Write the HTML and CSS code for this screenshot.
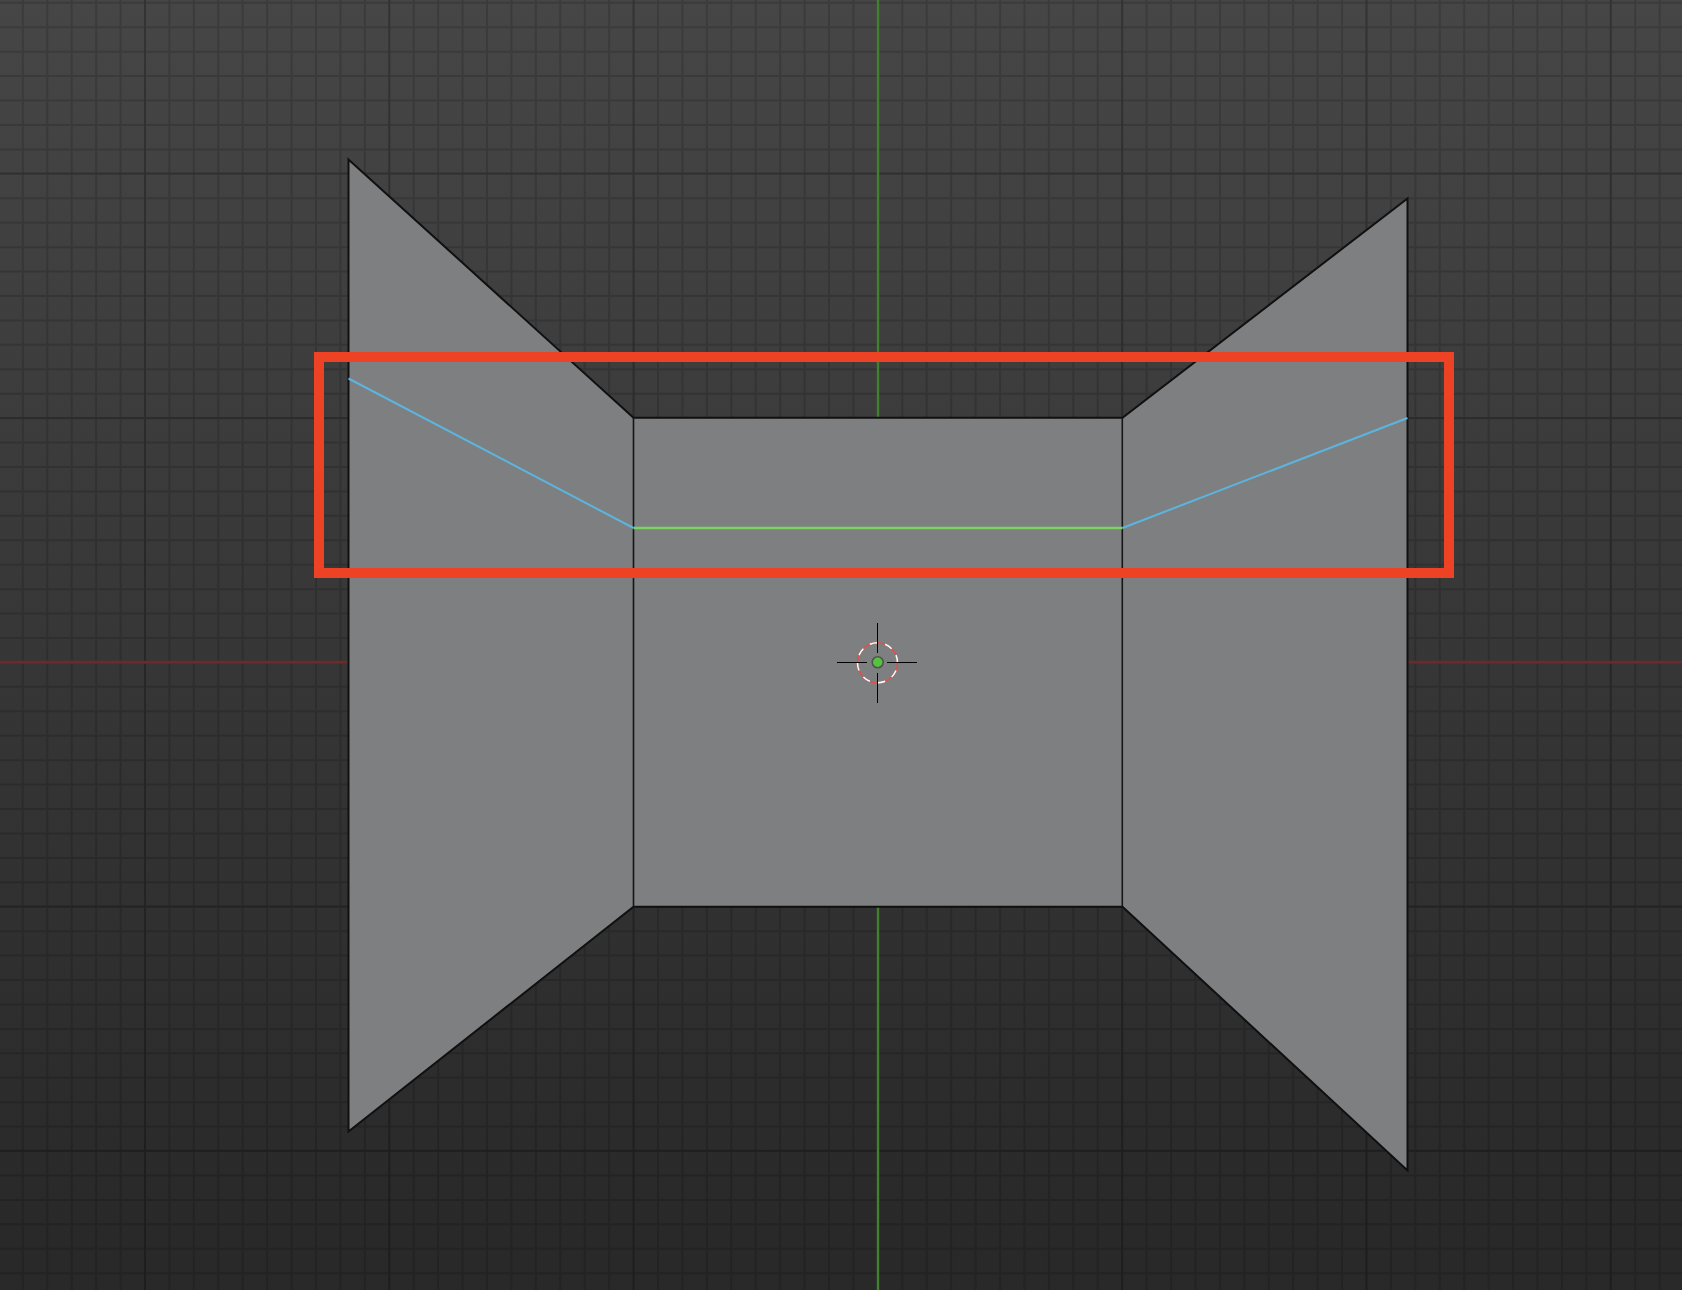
FILE: index.html
```html
<!DOCTYPE html>
<html lang="en">
<head>
<meta charset="utf-8">
<title>3D Viewport</title>
<link rel="stylesheet" href="styles.css">
</head>
<body>
<main class="viewport">
  <svg class="scene" viewBox="0 0 1682 1290" preserveAspectRatio="xMidYMid slice" role="img" aria-label="Top view of a folded mesh with a highlighted edge loop">
    <!-- grid: each path is one very wide stroke, dashed into grid lines -->
    <g class="grid minor">
      <path class="columns" d="M-2.6 645H1700"/>
      <path class="rows" d="M841 -22.6V1300"/>
    </g>
    <g class="grid major">
      <path class="columns" d="M-100.3 645H1700"/>
      <path class="rows" d="M841 -71.7V1300"/>
    </g>
    <path class="axis-x" d="M0 662.3H1682"/>
    <path class="axis-y" d="M878 0V1290"/>

    <!-- mesh -->
    <path class="faces" d="M348.5 159.5L633.5 417.7H1122.5L1407.5 198.5V1170.5L1122.5 906.7H633.5L348.5 1131.5Z"/>
    <path class="inner-edges" d="M633.5 417.5V906.5M1122.3 417.5V906.5"/>
    <path class="loop-blue" d="M348.5 378.5L633.5 528M1122.5 528L1407.5 418"/>
    <path class="loop-green" d="M633.5 528H1122.5"/>

    <!-- 3D cursor and object origin -->
    <circle class="ring-red" cx="877.5" cy="662.8" r="20"/>
    <circle class="ring-white" cx="877.5" cy="662.8" r="20" pathLength="16"/>
    <path class="cross" d="M837 662.5h30M887 662.5h30M877.5 623v30M877.5 673v30"/>
    <circle class="origin" cx="877.7" cy="662.3" r="5.5"/>

    <rect class="callout" x="319" y="357" width="1130" height="216"/>
  </svg>
</main>
</body>
</html>
```
FILE: styles.css
```css
html,
body {
  height: 100%;
  margin: 0;
}

.viewport {
  height: 100%;
  overflow: hidden;
  background: linear-gradient(#464646, #383838 45%, #292929 95%);
}

.scene {
  display: block;
  width: 100%;
  height: 100%;
  fill: none;
}

/* group opacity keeps line crossings as light as the lines */
.grid {
  stroke: #000;
}

.minor {
  opacity: 0.14;
  stroke-dasharray: 2 22.43;
}

.major {
  opacity: 0.13;
  stroke-dasharray: 2 242.3;
}

.columns {
  stroke-width: 1300;
}

.rows {
  stroke-width: 1700;
}

.axis-x {
  stroke: #6b2b2d;
  stroke-width: 3;
}

.axis-y {
  stroke: #41802f;
  stroke-width: 2.4;
}

.faces {
  fill: #7e7f80;
  stroke: #101010;
  stroke-width: 2;
}

.inner-edges {
  stroke: #161616;
  stroke-width: 1.6;
}

.loop-blue {
  stroke: #5bb5de;
  stroke-width: 2;
}

.loop-green {
  stroke: #7ad25f;
  stroke-width: 2.4;
}

.ring-red {
  stroke: #e0504a;
  stroke-width: 1.5;
}

.ring-white {
  stroke: #fff;
  stroke-width: 1.5;
  stroke-dasharray: 1 1;
  stroke-dashoffset: 1;
}

.cross {
  stroke: #000;
  stroke-width: 1;
}

.origin {
  fill: #56c23f;
  stroke: #4b574a;
  stroke-width: 1.6;
}

.callout {
  stroke: #ed4224;
  stroke-width: 10;
}
```
